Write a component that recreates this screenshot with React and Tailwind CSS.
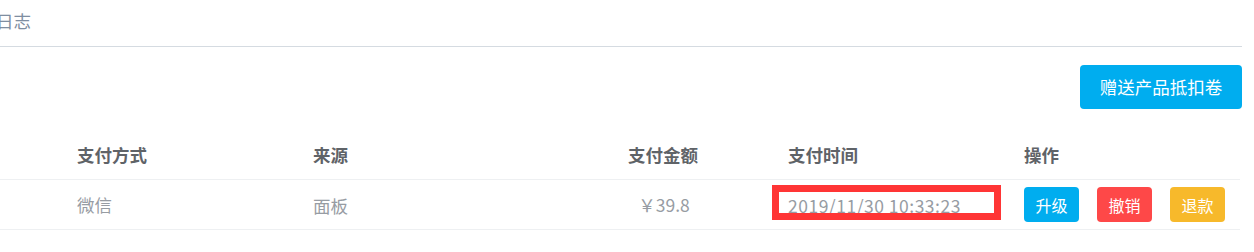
export default function App() {
  const font = { fontFamily: '"Noto Sans CJK SC", "Noto Sans", sans-serif' };
  return (
    <div className="w-[1254px] h-[252px] bg-white overflow-hidden" style={font}>
      <div className="w-[1242px]">
        <div className="h-[47px] flex items-center border-b border-[#d5dbe1]">
          <span className="ml-[-4px] mt-[-4px] text-[17.5px] text-[#7f8ea1] leading-none">日志</span>
        </div>
        <div className="flex justify-end pt-[18px]">
          <button className="w-[162px] h-[44px] rounded-[4px] bg-[#00adef] text-white text-[17.5px] leading-none">
            赠送产品抵扣卷
          </button>
        </div>
        <div className="w-[1240px] mt-[23px]">
          <div className="flex h-[48px] items-center border-b border-[#eef0f2] text-[17.5px] font-bold text-[#5f6368]">
            <div className="w-[67px]" />
            <div className="w-[236px] pl-[10px]">支付方式</div>
            <div className="w-[245px] pl-[10px]">来源</div>
            <div className="w-[230px] text-center">支付金额</div>
            <div className="w-[236px] pl-[10px]">支付时间</div>
            <div className="w-[226px] pl-[10px]">操作</div>
          </div>
          <div className="flex h-[50px] items-center border-b border-[#eef0f2] text-[17.5px] text-[#979ca3]">
            <div className="w-[67px]" />
            <div className="w-[236px] pl-[10px] pt-[2px]">微信</div>
            <div className="w-[245px] pl-[10px] pt-[4px]">面板</div>
            <div className="w-[230px] text-center pl-[2px] pt-[2px]">￥39.8</div>
            <div className="relative w-[236px] pl-[10px] pt-[3px] tracking-[0.5px]">
              2019/11/30 10:33:23
              <div className="absolute left-[-6px] top-[-5px] w-[229px] h-[35px] border-[7px] border-[#ff3535]" />
            </div>
            <div className="w-[226px] pl-[10px] flex gap-[18px] text-[16px]">
              <button className="w-[55px] h-[35px] rounded-[4px] bg-[#00adef] text-white leading-none">升级</button>
              <button className="w-[55px] h-[35px] rounded-[4px] bg-[#fe4848] text-white leading-none">撤销</button>
              <button className="w-[55px] h-[35px] rounded-[4px] bg-[#f7b92b] text-white leading-none">退款</button>
            </div>
          </div>
        </div>
      </div>
    </div>
  );
}
